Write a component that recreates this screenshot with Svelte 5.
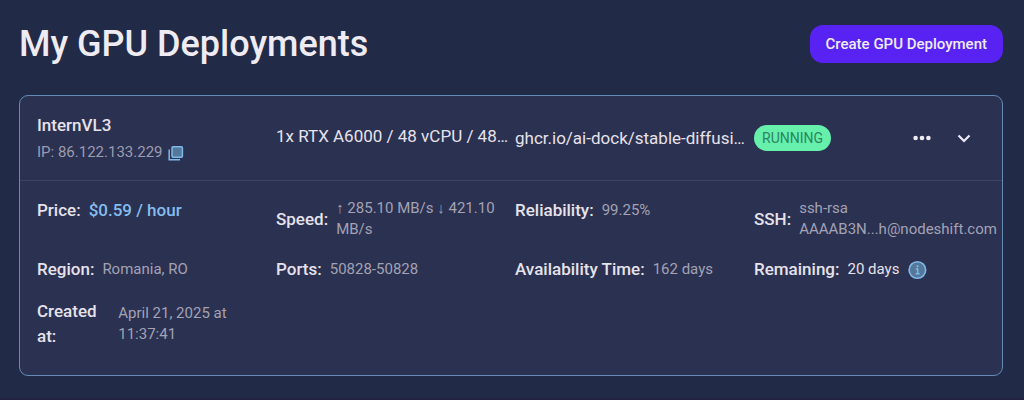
<script>
  let expanded = true;
  let copied = false;

  const deployment = {
    name: 'InternVL3',
    ip: '86.122.133.229',
    spec: '1x RTX A6000 / 48 vCPU / 48…',
    image: 'ghcr.io/ai-dock/stable-diffusi…',
    status: 'RUNNING',
  };

  const details = [
    { label: 'Price:', value: '$0.59 / hour', kind: 'price' },
    { label: 'Speed:', value: '↑ 285.10 MB/s ↓ 421.10 MB/s' },
    { label: 'Reliability:', value: '99.25%' },
    { label: 'SSH:', value: 'ssh-rsa AAAAB3N...h@nodeshift.com' },
    { label: 'Region:', value: 'Romania, RO' },
    { label: 'Ports:', value: '50828-50828' },
    { label: 'Availability Time:', value: '162 days' },
    { label: 'Remaining:', value: '20 days', kind: 'remaining' },
    { label: 'Created at:', value: 'April 21, 2025 at 11:37:41' },
  ];

  function copyIp() {
    navigator.clipboard?.writeText(deployment.ip);
    copied = true;
  }
</script>

<main>
  <header class="top">
    <h1>My GPU Deployments</h1>
    <button class="create">Create GPU Deployment</button>
  </header>

  <section class="card">
    <div class="summary">
      <div class="identity">
        <h2>{deployment.name}</h2>
        <div class="ip">
          <span>IP: {deployment.ip}</span>
          <button class="icon" aria-label={copied ? 'Copied' : 'Copy IP'} on:click={copyIp}>
            <svg width="16" height="16" viewBox="0 0 16 16" fill="none" stroke="#7fb9ea" stroke-width="1.5">
              <rect x="4" y="1.8" width="10.4" height="10.4" rx="1" fill="#557799" />
              <path d="M1.2 4.4v10.4H12" />
            </svg>
          </button>
        </div>
      </div>
      <p class="spec">{deployment.spec}</p>
      <p>{deployment.image}</p>
      <div class="state">
        <span class="badge">{deployment.status}</span>
        <div class="actions">
          <button class="icon" aria-label="More actions">
            <svg width="20" height="20" viewBox="0 0 20 20" fill="#efebf3">
              <circle cx="3.6" cy="10" r="2.3" />
              <circle cx="10" cy="10" r="2.3" />
              <circle cx="16.4" cy="10" r="2.3" />
            </svg>
          </button>
          <button class="icon" aria-label="Toggle details" aria-expanded={expanded} on:click={() => (expanded = !expanded)}>
            <svg width="20" height="20" viewBox="0 0 20 20" fill="none" stroke="#efebf3" stroke-width="2.2">
              <path d="M4.5 7.5l5.5 5.5 5.5-5.5" />
            </svg>
          </button>
        </div>
      </div>
    </div>

    {#if expanded}
      <dl class="details">
        {#each details as item}
          <div class="item">
            <dt>{item.label}</dt>
            <dd class={item.kind}>{item.value}</dd>
            {#if item.kind === 'remaining'}
              <button class="icon" aria-label="About remaining time">
                <svg width="20" height="20" viewBox="0 0 20 20">
                  <circle cx="10.4" cy="10" r="8.3" fill="#557799" stroke="#7fb9ea" stroke-width="1.6" />
                  <path d="M8.8 9h1.9v4.6M8.6 13.7h4" fill="none" stroke="#7fb9ea" stroke-width="1.4" />
                  <circle cx="10.5" cy="6.3" r="1.1" fill="#7fb9ea" />
                </svg>
              </button>
            {/if}
          </div>
        {/each}
      </dl>
    {/if}
  </section>
</main>

<style>
  :global(body) {
    background: #212a47;
  }

  main {
    padding: 25px 21px 22px 19px;
    border-bottom: 2px solid #22213f;
    font-family: Roboto, sans-serif;
    color: #e6e2eb;
  }

  h1, h2, p, dl, dd {
    margin: 0;
  }

  button {
    font-family: inherit;
    border: 0;
    cursor: pointer;
  }

  .top {
    display: flex;
    justify-content: space-between;
    align-items: center;
    margin-bottom: 32px;
  }

  h1 {
    font-size: 36px;
    line-height: 38px;
    font-weight: 500;
    color: #efebf3;
  }

  .create {
    height: 38px;
    padding: 0 16px;
    border-radius: 13px;
    background: #5822f2;
    color: #efebf3;
    font-size: 15px;
    font-weight: 500;
  }

  .card {
    border: 1px solid #648bb5;
    border-radius: 9px;
    background: #2b3150;
  }

  .summary,
  .details {
    display: grid;
    grid-template-columns: repeat(4, minmax(0, 1fr));
    column-gap: 8px;
    padding: 17px;
  }

  .summary {
    align-items: center;
    border-bottom: 1px solid #3e435f;
    font-size: 17px;
    line-height: 25px;
  }

  .summary p {
    white-space: nowrap;
  }

  .summary .spec {
    padding-bottom: 4px;
  }

  h2 {
    font-size: 17px;
    line-height: 25px;
    font-weight: 500;
  }

  .ip {
    display: flex;
    align-items: center;
    gap: 5px;
    margin-top: 4px;
    font-size: 15px;
    line-height: 21px;
    color: #9b9bb0;
  }

  .icon {
    display: flex;
    padding: 0;
    background: none;
  }

  .state {
    display: flex;
    align-items: center;
    justify-content: space-between;
  }

  .badge {
    padding: 0 8px;
    border-radius: 13px;
    background: #66f0ac;
    color: #2c8560;
    font-size: 14px;
    line-height: 26px;
  }

  .actions {
    display: flex;
    gap: 22px;
    padding-right: 11px;
  }

  .details {
    row-gap: 17px;
    align-items: start;
    padding-bottom: 26px;
  }

  .item {
    display: flex;
    align-items: center;
    gap: 8px;
  }

  dt {
    font-size: 17px;
    line-height: 25px;
    font-weight: 500;
  }

  dd {
    font-size: 15px;
    line-height: 21px;
    color: #a3a2b6;
  }

  .price {
    font-size: 17px;
    font-weight: 500;
    color: #84bdee;
  }

  .remaining {
    color: #e6e2eb;
  }
</style>
